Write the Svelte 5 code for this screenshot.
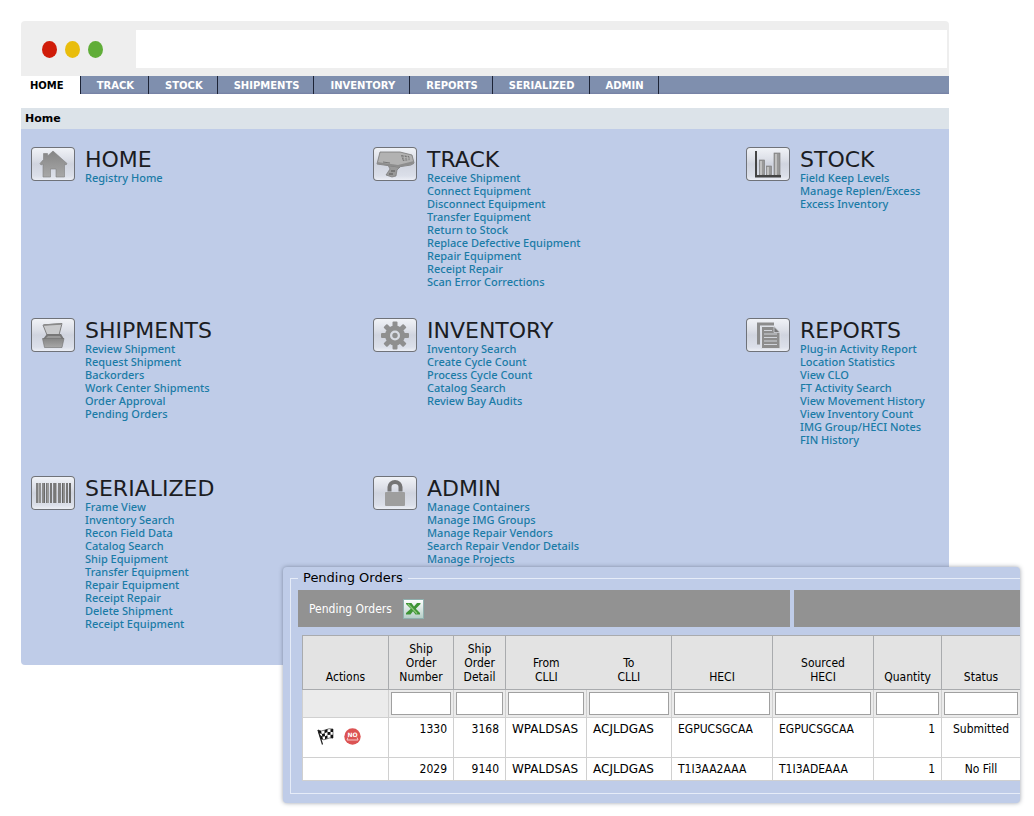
<script>
  const tabs = ['HOME', 'TRACK', 'STOCK', 'SHIPMENTS', 'INVENTORY', 'REPORTS', 'SERIALIZED', 'ADMIN'];

  const sections = [
    { icon: 'home', title: 'HOME', links: ['Registry Home'] },
    {
      icon: 'track',
      title: 'TRACK',
      links: [
        'Receive Shipment', 'Connect Equipment', 'Disconnect Equipment', 'Transfer Equipment',
        'Return to Stock', 'Replace Defective Equipment', 'Repair Equipment', 'Receipt Repair',
        'Scan Error Corrections'
      ]
    },
    { icon: 'stock', title: 'STOCK', links: ['Field Keep Levels', 'Manage Replen/Excess', 'Excess Inventory'] },
    {
      icon: 'shipments',
      title: 'SHIPMENTS',
      links: ['Review Shipment', 'Request Shipment', 'Backorders', 'Work Center Shipments', 'Order Approval', 'Pending Orders']
    },
    {
      icon: 'inventory',
      title: 'INVENTORY',
      links: ['Inventory Search', 'Create Cycle Count', 'Process Cycle Count', 'Catalog Search', 'Review Bay Audits']
    },
    {
      icon: 'reports',
      title: 'REPORTS',
      links: [
        'Plug-in Activity Report', 'Location Statistics', 'View CLO', 'FT Activity Search',
        'View Movement History', 'View Inventory Count', 'IMG Group/HECI Notes', 'FIN History'
      ]
    },
    {
      icon: 'serialized',
      title: 'SERIALIZED',
      links: [
        'Frame View', 'Inventory Search', 'Recon Field Data', 'Catalog Search', 'Ship Equipment',
        'Transfer Equipment', 'Repair Equipment', 'Receipt Repair', 'Delete Shipment', 'Receipt Equipment'
      ]
    },
    {
      icon: 'admin',
      title: 'ADMIN',
      links: ['Manage Containers', 'Manage IMG Groups', 'Manage Repair Vendors', 'Search Repair Vendor Details', 'Manage Projects']
    }
  ];

  const columns = [
    { lines: ['Ship', 'Order', 'Number'], kind: 'num' },
    { lines: ['Ship', 'Order', 'Detail'], kind: 'num' },
    { lines: ['From', 'CLLI'], kind: 'clli' },
    { lines: ['To', 'CLLI'], kind: 'clli' },
    { lines: ['HECI'], kind: 'code' },
    { lines: ['Sourced', 'HECI'], kind: 'code' },
    { lines: ['Quantity'], kind: 'num' },
    { lines: ['Status'], kind: 'mid' }
  ];

  const orders = [
    { actions: true, cells: ['1330', '3168', 'WPALDSAS', 'ACJLDGAS', 'EGPUCSGCAA', 'EGPUCSGCAA', '1', 'Submitted'] },
    { actions: false, cells: ['2029', '9140', 'WPALDSAS', 'ACJLDGAS', 'T1I3AA2AAA', 'T1I3ADEAAA', '1', 'No Fill'] }
  ];

  const teeth = [0, 45, 90, 135, 180, 225, 270, 315];

  // Barcode stripes: x offset, width, shade
  const stripes = [
    [5, 2, '#808080'], [7, 1, '#b4b4b4'], [8, 2, '#909090'], [11, 2, '#8a8a8a'], [13, 1, '#6a6a6a'],
    [15, 1, '#777'], [16, 2, '#999'], [19, 2, '#777'], [22, 1, '#888'], [23, 2, '#777'], [25, 1, '#b0b0b0'],
    [27, 3, '#808080'], [31, 1, '#666'], [32, 2, '#909090'], [35, 2, '#777'], [38, 2, '#666']
  ];
</script>

<div class="page">
  <div class="browser">
    <div class="chrome">
      <div class="lights"><i class="red"></i><i class="yellow"></i><i class="green"></i></div>
      <input class="address" type="text" aria-label="Address" />
    </div>

    <nav class="tabs">
      {#each tabs as tab, i}
        <a href="#{tab.toLowerCase()}" class:active={i === 0}>{tab}</a>
      {/each}
    </nav>

    <div class="crumb">Home</div>

    <main class="menu">
      {#each sections as s}
        <section>
          <div class="tile">
            <svg viewBox="0 0 44 34" width="44" height="34" aria-hidden="true">
              <defs>
                <linearGradient id="metal-{s.icon}" x1="0" y1="0" x2="0" y2="1">
                  <stop offset="0" stop-color="#858585" />
                  <stop offset="1" stop-color="#a8a8a8" />
                </linearGradient>
              </defs>
              {#if s.icon === 'home'}
                <path fill="url(#metal-home)" stroke="#808080" stroke-width=".6" d="M22 4 L16.500 9 V6.500 H12.500 V12.500 L9 16.500 L10 18 L12 17 V30 H19.500 V22 H25 V30 H33.500 V17 L35 18 L36 16.500Z" />
              {:else if s.icon === 'track'}
                <path fill="#999" stroke="#777" stroke-width=".7" d="M15 18 L27 20 L24 23 L23 29 L19 30 L13 28 L17 22Z" />
                <path fill="#777" d="M18 23h4v2h-4zM16 26h4v2h-4z" />
                <path fill="#b2b2b2" stroke="#777" stroke-width=".8" d="M7 5 L27 5 L39 8 L41 16 L38 18 L25 20 L4 17Z" />
                <path fill="#8d8d8d" d="M4 15 L25 18 L41 14 V17 L25 20 L4 17Z" />
                <path fill="#777" d="M28 8 L36 9 L37 13 L30 14Z" />
                <path stroke="#bbb" stroke-width=".8" d="M29 10l7 1M30 12l7 0M31 8l1 6M34 8l1 6" />
                <path stroke="#777" stroke-width="1" d="M10 15l7 1" />
              {:else if s.icon === 'stock'}
                <g fill="#999" stroke="#777" stroke-width=".6">
                  <rect x="13.500" y="13" width="5" height="15" />
                  <rect x="20.500" y="19" width="5" height="9" />
                  <rect x="28" y="6" width="6" height="22" />
                </g>
                <path fill="#c0c0c0" d="M14 14h2v14h-2zM21 20h2v8h-2zM29 7h2v21h-2z" />
                <path fill="#444" d="M9 4h2v24h24v2.500H9z" />
              {:else if s.icon === 'shipments'}
                <path fill="#c9cacc" stroke="#808080" stroke-width="1" d="M12 7 L31 5.500 L28 17 H16Z" />
                <path fill="none" stroke="#8a8a8a" stroke-width="1.500" d="M13 7 L30 6" />
                <path fill="#777" d="M16 16h14l3 5H12z" />
                <path fill="#999" d="M17 18h12l2 3H14z" />
                <path fill="url(#metal-shipments)" stroke="#6f6f6f" stroke-width=".6" d="M11.500 20.500 H33 L31 29.500 H13.500Z" />
              {:else if s.icon === 'inventory'}
                <g transform="translate(22 17.500)" fill="#8f8f8f">
                  {#each teeth as a}
                    <rect x="-2.500" y="-14" width="5" height="7" rx="1" transform="rotate({a})" />
                  {/each}
                  <circle r="10" />
                  <circle r="5" fill="#d9dce4" />
                  <circle r="2.700" />
                </g>
              {:else if s.icon === 'reports'}
                <path fill="#8c8c8c" d="M11 4.500h17v3H14v19h-3z" />
                <path fill="#8c8c8c" stroke="#dde0e6" stroke-width="1" d="M15.500 8.500 H28 L34 14.500 V30.500 H15.500Z" />
                <path fill="#777" stroke="#dde0e6" stroke-width=".7" d="M28 8.500V14.500H34Z" />
                <path stroke="#d0d3d9" stroke-width="1.200" d="M18 12.500h8M18 16h13M18 19.500h13M18 23h13M18 26.500h13" />
              {:else if s.icon === 'serialized'}
                {#each stripes as [x, w, c]}
                  <rect {x} y="7" width={w} height="20" fill={c} />
                {/each}
              {:else}
                <path fill="none" stroke="#757575" stroke-width="4" d="M16.500 15.500 V11 a5.500 5 0 0 1 11 0 V15.500" />
                <rect x="12" y="16" width="20" height="14" rx="1" fill="#9e9e9e" />
              {/if}
            </svg>
          </div>
          <div class="entry">
            <h2>{s.title}</h2>
            <ul>
              {#each s.links as link}
                <li><a href="#{s.icon}">{link}</a></li>
              {/each}
            </ul>
          </div>
        </section>
      {/each}
    </main>
  </div>

  <div class="window">
    <fieldset>
      <legend>Pending Orders</legend>
      <div class="toolbar">
        <div class="bar">
          <span>Pending Orders</span>
          <button type="button" aria-label="Export to spreadsheet">
            <svg viewBox="0 0 21 20" width="21" height="20" aria-hidden="true">
              <defs>
                <linearGradient id="sheet" x1="0" y1="0" x2="0" y2="1">
                  <stop offset="0" stop-color="#fff" />
                  <stop offset="1" stop-color="#b4cdc6" />
                </linearGradient>
              </defs>
              <rect x=".5" y=".5" width="20" height="19" fill="url(#sheet)" stroke="#8fb0ae" />
              <path fill="#3f9436" d="M3 4H8.500L11 7.500L14 4H17.500V5L12.800 9.800L17 14V15.500H12.500L10 12.300L7.500 15.500H3V14L7.800 9.800L3 5Z" />
              <path stroke="#8cc878" stroke-width="1.200" d="M5 5l9 9.500" />
            </svg>
          </button>
        </div>
        <div class="bar"></div>
      </div>

      <table>
        <colgroup>
          <col class="c-act" /><col class="c-num" /><col class="c-det" /><col class="c-from" /><col class="c-to" />
          <col class="c-heci" /><col class="c-heci" /><col class="c-qty" /><col />
        </colgroup>
        <thead>
          <tr class="heads">
            <th scope="col">Actions</th>
            {#each columns as c, i}
              <th scope="col" class:open={i === 2}>
                {#each c.lines as line}<span>{line}</span>{/each}
              </th>
            {/each}
          </tr>
          <tr class="filters">
            <td></td>
            {#each columns as c}
              <td><input type="text" aria-label="Filter {c.lines.join(' ')}" /></td>
            {/each}
          </tr>
        </thead>
        <tbody>
          {#each orders as o}
            <tr class:tall={o.actions}>
              <td class="acts">
                {#if o.actions}
                  <div>
                    <button type="button" aria-label="Complete order">
                      <svg viewBox="0 0 17 17" width="17" height="17" aria-hidden="true">
                        <path fill="#fff" stroke="#222" stroke-width=".6" d="M1 2 Q4 4 8 2 T16 1 L16 10 Q12 9.500 9.500 11 T4 11Z" />
                        <path fill="#111" d="M1 2l3 1 .8 3-3 -1zM7.500 2.200l3-1.200v3l-3 1.200zM13.500 1.200L16 1v3h-2.500zM4.800 6l3-.8.2 3-2.600.6zM10.500 4l3-.3v3l-3 .3zM2.800 7l2.500 1.500L6 11.300 4 11zM8 8.200l2.500-1v3L8 11.300zM13.500 6.700H16v3.500l-2.500-.5z" />
                        <path stroke="#222" stroke-width="1.200" d="M1 2l4.500 14.500" />
                      </svg>
                    </button>
                    <button type="button" aria-label="Reject order">
                      <svg viewBox="0 0 17 17" width="17" height="17" aria-hidden="true">
                        <circle cx="8.500" cy="8.500" r="8.200" fill="#dc5353" />
                        <text x="8.500" y="8.500" text-anchor="middle" class="no">NO</text>
                        <path fill="none" stroke="#f6c8c8" stroke-width="1" d="M4 9.500l-1 2.500h11l-1-2.500" />
                      </svg>
                    </button>
                  </div>
                {/if}
              </td>
              {#each o.cells as cell, i}
                <td class={columns[i].kind}>{cell}</td>
              {/each}
            </tr>
          {/each}
        </tbody>
      </table>
    </fieldset>
  </div>
</div>

<style>
  :global(body) {
    margin: 0;
    background: #fff;
  }
  .page {
    position: relative;
    padding: 21px 85px 151px 21px;
    font-family: 'DejaVu Sans', Verdana, sans-serif;
    font-size: 11px;
    color: #111;
  }
  a {
    text-decoration: none;
  }
  button {
    display: block;
    padding: 0;
    border: 0;
    background: none;
  }
  svg {
    display: block;
  }

  .chrome {
    display: flex;
    align-items: flex-start;
    gap: 33px;
    height: 46px;
    padding: 9px 2px 0 21px;
    background: #eee;
    border-radius: 4px 4px 0 0;
  }
  .lights {
    display: flex;
    gap: 8px;
    padding-top: 11px;
  }
  .lights i {
    width: 15px;
    height: 17px;
    border-radius: 50%;
  }
  .red { background: #d01c09; }
  .yellow { background: #e9bd0c; }
  .green { background: #60ad38; }
  .address {
    flex: 1;
    min-width: 0;
    height: 38px;
    padding: 0 10px;
    border: 0;
    background: #fff;
    box-sizing: border-box;
  }

  .tabs {
    display: flex;
    height: 18px;
    background: linear-gradient(#7f8fae 0 16px, #747fa3);
  }
  .tabs a {
    padding: 0 14px 0 16px;
    border-right: 1px solid #1c2336;
    font-size: 10px;
    font-weight: bold;
    line-height: 19px;
    color: #fff;
  }
  .tabs a.active {
    padding: 0 16px 0 9px;
    background: #fff;
    color: #000;
  }

  .crumb {
    margin-top: 14px;
    padding: 0 4px;
    line-height: 21px;
    font-weight: bold;
    color: #000;
    background: #dce3e9;
  }

  .menu {
    display: grid;
    grid-template-columns: 342fr 373fr 203fr;
    row-gap: 30px;
    padding: 18px 0 35px 10px;
    background: #bfcce8;
    border-radius: 0 0 4px 4px;
  }
  section {
    display: flex;
    align-items: flex-start;
    gap: 10px;
    min-width: 0;
  }
  .tile {
    flex: none;
    border-radius: 4px;
    background: linear-gradient(#f2f4f8, #dde0e8 35%, #d0d4df 50%, #dbdfe9 85%, #f0f2f8);
    box-shadow: inset 0 0 0 1px #6f7279;
  }
  h2 {
    margin: 0 0 -2px;
    font-size: 22px;
    font-weight: normal;
    line-height: 26px;
    color: #1b1c22;
  }
  ul {
    margin: 0;
    padding: 0;
    list-style: none;
  }
  li {
    font-family: 'Noto Sans', Verdana, sans-serif;
    font-weight: 500;
    line-height: 13px;
    white-space: nowrap;
  }
  li a {
    color: #1a7ba6;
  }

  .window {
    position: absolute;
    top: 567px;
    left: 283px;
    right: 14px;
    padding: 2px 0 9px 7px;
    overflow: hidden;
    background: #bfcce8;
    border-radius: 4px;
    box-shadow: 0 0 4px rgba(60, 70, 90, 0.5);
  }
  fieldset {
    min-width: 0;
    margin: 0;
    padding: 3px 0 12px 7px;
    border: 1px solid #e6ecf8;
    border-right: 0;
  }
  legend {
    padding: 0 5px;
    font-size: 13px;
    line-height: 18px;
    color: #000;
  }
  .toolbar {
    display: grid;
    grid-template-columns: 492fr 226fr;
    gap: 4px;
  }
  .bar {
    display: flex;
    align-items: center;
    gap: 11px;
    height: 37px;
    padding-left: 11px;
    box-sizing: border-box;
    background: #929292;
    color: #fff;
    font-family: 'DejaVu Sans Condensed', Tahoma, 'DejaVu Sans', sans-serif;
    font-size: 12px;
  }

  table {
    width: calc(100% - 4px);
    margin: 8px 0 0 4px;
    table-layout: fixed;
    border-collapse: collapse;
    border: 1px solid #a9abae;
    border-right: 0;
    background: #fff;
    font-family: 'DejaVu Sans Condensed', Tahoma, 'DejaVu Sans', sans-serif;
    font-size: 12px;
    color: #000;
  }
  .c-act { width: 86px; }
  .c-num { width: 65px; }
  .c-det { width: 52px; }
  .c-from { width: 81px; }
  .c-to { width: 85px; }
  .c-heci { width: 101px; }
  .c-qty { width: 68px; }
  th {
    height: 54px;
    padding: 0 0 5px;
    box-sizing: border-box;
    vertical-align: bottom;
    font-weight: normal;
    line-height: 14px;
    background: #e3e3e3;
    border: 1px solid #a9abae;
  }
  th span {
    display: block;
  }
  th.open {
    border-right: 0;
  }
  th.open + th {
    border-left: 0;
  }
  th:last-child,
  td:last-child {
    border-right: 0;
  }
  td {
    height: 23px;
    padding: 4px 6px 0;
    box-sizing: border-box;
    vertical-align: top;
    line-height: 14px;
    border: 1px solid #d0d0d0;
  }
  .filters td {
    height: 28px;
    padding: 2px;
    background: #ebebeb;
  }
  .filters input {
    display: block;
    width: 100%;
    height: 23px;
    padding: 0 4px;
    box-sizing: border-box;
    border: 1px solid #a0a0a0;
    background: #fff;
  }
  .tall td {
    height: 40px;
  }
  .num { text-align: right; }
  .mid { text-align: center; }
  .clli {
    font-family: 'DejaVu Sans', Verdana, sans-serif;
  }
  .acts div {
    display: flex;
    gap: 10px;
    padding: 6px 8px 0;
  }
  .no {
    font-family: 'DejaVu Sans', sans-serif;
    font-size: 6px;
    font-weight: bold;
    fill: #fff;
  }
</style>
